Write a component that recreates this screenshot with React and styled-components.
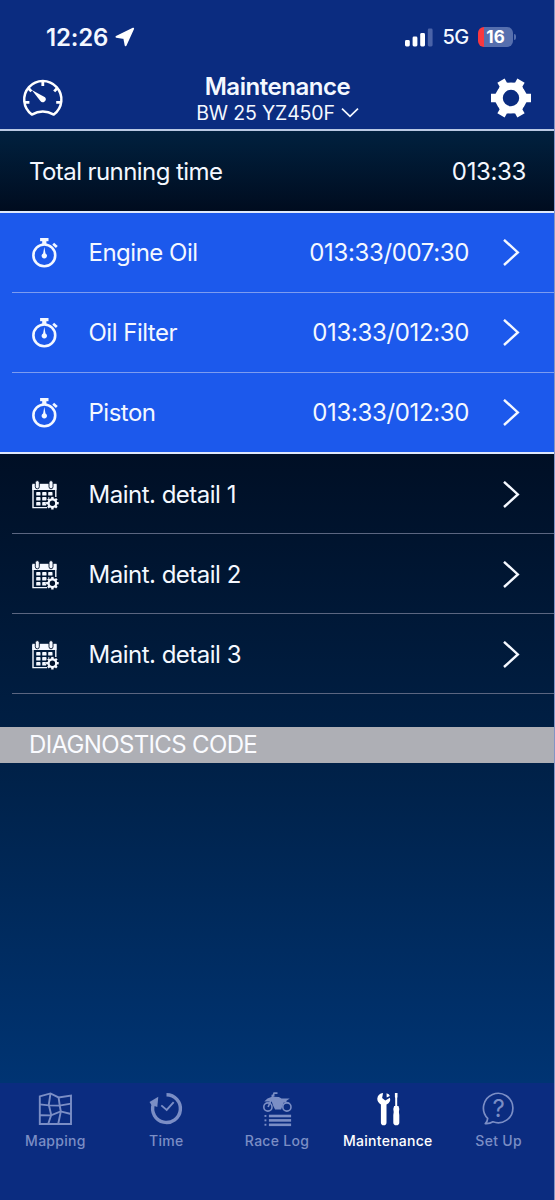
import React from 'react';
import styled, { createGlobalStyle } from "styled-components";

const GlobalStyle = createGlobalStyle`
  :root {
    --barColor: #0b2c80;
    --activeRowColor: #1c59ec;
    --textColor: #f4f8ff;
    --mutedColor: #7b8ec5;
  }

  * {
    box-sizing: border-box;
  }

  body {
    margin: 0;
    font-family: Inter, "Liberation Sans", sans-serif;
    color: var(--textColor);
  }
`;

const Screen = styled.div`
  display: flex;
  flex-direction: column;

  width: 555px;
  height: 1200px;
  overflow: hidden;

  border-right: 1px solid #8294c4;
  background: #001127;
`;

const Header = styled.header`
  height: 131px;
  flex-shrink: 0;

  background-color: var(--barColor);
  border-bottom: 2px solid #b9c9e4;
`;

const StatusBar = styled.div`
  display: flex;
  align-items: center;
  justify-content: space-between;

  height: 74px;
  padding: 0 38px 0 46px;
`;

const StatusGroup = styled.div`
  display: flex;
  align-items: center;
  gap: ${props => props.$gap}px;
`;

const Clock = styled.span`
  font-size: 24px;
  font-weight: 600;
  letter-spacing: -0.2px;
`;

const Network = styled.span`
  font-size: 20px;
  font-weight: 450;
  letter-spacing: -0.6px;
`;

const Battery = styled.div`
  display: flex;
  align-items: center;
  justify-content: center;

  width: 35px;
  height: 20px;
  border-radius: 6px;

  background: linear-gradient(to right, #f9383f 6px, #566fae 6px);

  color: #fff;
  font-size: 17px;
  font-weight: 700;
  letter-spacing: 0;
`;

const BatteryCap = styled.div`
  width: 2px;
  height: 6px;
  margin-left: 1px;
  border-radius: 0 2px 2px 0;
  background-color: #566fae;
`;

const BatteryWrap = styled.div`
  display: flex;
  align-items: center;
`;

const TitleBar = styled.div`
  display: flex;
  align-items: flex-start;
  justify-content: space-between;

  padding: 0 22px;
`;

const TitleSide = styled.div`
  display: flex;
  padding-top: ${props => props.$top}px;
`;

const TitleBlock = styled.div`
  display: flex;
  flex-direction: column;
  align-items: center;

  padding-left: 1px;
`;

const Title = styled.h1`
  margin: 0;
  font-size: 24px;
  line-height: 26px;
  font-weight: 600;
  letter-spacing: -0.45px;
`;

const Subtitle = styled.div`
  display: flex;
  align-items: center;
  gap: 6px;

  font-size: 19.5px;
  line-height: 26px;
  letter-spacing: -0.15px;
`;

const TotalRow = styled.div`
  display: flex;
  align-items: center;
  justify-content: space-between;

  height: 80px;
  flex-shrink: 0;
  padding: 0 28px 0 29px;

  background: linear-gradient(#01213f, #000c1f);
`;

const Label = styled.span`
  font-size: 24px;
  letter-spacing: -0.58px;
`;

const Time = styled.span`
  font-size: 24px;
  letter-spacing: -0.36px;
`;

const Timers = styled.div`
  flex-shrink: 0;
  height: 243px;

  background-color: var(--activeRowColor);
  border-top: 2px solid #dfe8fb;
  border-bottom: 2px solid #dfe8fb;
`;

const Content = styled.main`
  display: flex;
  flex-direction: column;
  flex: 1;

  background: linear-gradient(#000f25, #002148 50%, #003473);
`;

const Row = styled.div`
  display: flex;
  align-items: center;

  height: 80px;
  margin-left: 12px;
  padding: 0 34px 0 19px;

  border-bottom: 1px solid ${props => props.$line};
`;

const TimerRow = styled(Row)`
  &:last-child {
    border-bottom: none;
    height: 79px;
  }
`;

const DetailRow = styled(Row)`
  padding-top: 2px;
`;

const RowLabel = styled(Label)`
  flex: 1;
  margin-left: 29.5px;
  letter-spacing: -0.5px;
`;

const RowValue = styled(Time)`
  margin-right: 33px;
`;

const SectionTitle = styled.h2`
  height: 36px;
  margin: 33px 0 0;
  padding-left: 29px;

  background-color: #aeafb5;

  color: #fafbff;
  font-size: 24px;
  line-height: 36px;
  font-weight: 400;
  letter-spacing: -0.65px;
`;

const TabBar = styled.nav`
  display: grid;
  grid-template-columns: repeat(5, 1fr);

  height: 117px;
  flex-shrink: 0;

  background-color: var(--barColor);
`;

const Tab = styled.div`
  display: flex;
  flex-direction: column;
  align-items: center;

  padding-top: 8px;

  color: ${props => (props.$active ? "#fff" : "var(--mutedColor)")};
`;

const TabLabel = styled.span`
  margin-top: 5px;
  font-size: 14px;
  line-height: 18px;
  font-weight: 500;
  letter-spacing: 0.28px;
`;

const LocationIcon = () => (
    <svg width="20" height="20" viewBox="0 0 20 20" fill="#fff" stroke="#fff" strokeWidth="1.8" strokeLinejoin="round">
        <path d="M18.2 1.6 L1.4 9.8 L9.2 11 L10.6 18.4 Z" />
    </svg>
);

const SignalIcon = () => (
    <svg width="28" height="19" viewBox="0 0 28 19" fill="#fff">
        <rect x="0" y="12" width="4.8" height="6.5" rx="1.4" />
        <rect x="7.6" y="8.6" width="4.8" height="9.9" rx="1.4" />
        <rect x="15.2" y="5" width="4.8" height="13.5" rx="1.4" />
        <rect x="22.8" y="0.5" width="4.8" height="18" rx="1.4" fill="#4a63a8" />
    </svg>
);

const GaugeIcon = () => (
    <svg width="42" height="40" viewBox="22 78 42 40" fill="none" stroke="#fff" strokeWidth="2.5">
        <path d="M31.8 114.6 A18.6 18.6 0 1 1 53.8 114.6 Q42.8 108.6 31.8 114.6 Z" strokeLinejoin="round" />
        <path d="M42.8 81 V86 M25 102.4 H29.4 M56.2 102.4 H60.6 M54.2 91.4 L57.4 88 M31.4 91.4 L28.2 88" strokeWidth="2.8" />
        <path d="M31.8 90 L45 97.2 A2.9 2.9 0 1 1 40.4 101 Z" fill="#fff" stroke="none" />
    </svg>
);

const GearIcon = () => (
    <svg width="42" height="42" viewBox="-21 -21 42 42">
        <circle r="11.9" fill="none" stroke="#fff" strokeWidth="7.4" />
        {[0, 60, 120, 180, 240, 300].map(angle => (
            <path key={angle} d="M12 -7.8 L15.6 -4.2 H20 V4.2 H15.6 L12 7.8 Z" fill="#fff" transform={`rotate(${angle})`} />
        ))}
    </svg>
);

const DownIcon = () => (
    <svg width="18" height="11" viewBox="0 0 18 11" fill="none" stroke="#f4f8ff" strokeWidth="1.7">
        <path d="M1 0.6 L9 8.4 L17 0.6" />
    </svg>
);

const ChevronIcon = () => (
    <svg width="18" height="28" viewBox="0 0 18 28" fill="none" stroke="#f4f8ff" strokeWidth="2.4">
        <path d="M2 0.8 L15.8 13.4 L2 26" />
    </svg>
);

const StopwatchIcon = () => (
    <svg width="28" height="32" viewBox="31 237 28 32" fill="#f4f8ff">
        <circle cx="44.3" cy="255.4" r="10.9" fill="none" stroke="#f4f8ff" strokeWidth="2.6" />
        <rect x="40.1" y="238" width="8.4" height="3.2" />
        <rect x="42.2" y="241" width="4.2" height="4" />
        <path d="M53.2 243.8 L56.8 247" stroke="#f4f8ff" strokeWidth="2.8" />
        <path d="M44.3 247 L45.5 253.4 A2.7 2.7 0 1 1 43.1 253.4 Z" />
    </svg>
);

const CalendarIcon = () => (
    <svg width="28" height="30" viewBox="31 479 28 30" fill="#f4f8ff">
        <path d="M33 484 H55.8 V496 M33 484 V506.6 H47" fill="none" stroke="#f4f8ff" strokeWidth="1.4" />
        <rect x="32.3" y="482.8" width="24.2" height="6.2" />
        {[37.3, 51].map(x => (
            <rect key={x} x={x - 2} y="479.6" width="4" height="8.2" rx="2" stroke="#01122b" strokeWidth="0.9" />
        ))}
        {[491, 496, 501].map((y, line) =>
            [36.2, 42.2, 48.2].slice(0, line === 2 ? 2 : 3).map(x => (
                <rect key={x + y} x={x} y={y} width="4.3" height="3.6" rx="0.7" />
            ))
        )}
        <circle cx="52.4" cy="502.2" r="6.6" fill="#01122b" />
        <circle cx="52.4" cy="502.2" r="3.8" fill="none" stroke="#f4f8ff" strokeWidth="2.2" />
        {[0, 45, 90, 135, 180, 225, 270, 315].map(angle => (
            <rect key={angle} x="56.2" y="501" width="2.5" height="2.4" transform={`rotate(${angle} 52.4 502.2)`} />
        ))}
    </svg>
);

const MappingIcon = () => (
    <svg width="36" height="36" viewBox="37 1091 36 36" fill="none" stroke="currentColor" strokeWidth="1.9">
        <path d="M39.8 1096.4 L50.5 1093.4 L58.6 1097.4 L71 1095.6 V1124 H39.8 Z" />
        <path d="M50.5 1093.4 L48.8 1104.6 L51.2 1115 L48.2 1124 M58.6 1097.4 L59.8 1106 L60.8 1111.6 L58.2 1124" />
        <path d="M39.8 1104.4 L48.8 1105.4 L59.4 1105.6 L71 1103.6 M39.8 1115.2 L51 1115.4 L60.6 1111.4 L71 1114" />
    </svg>
);

const TimeIcon = () => (
    <svg width="36" height="36" viewBox="148.5 1091 36 36" fill="none" stroke="currentColor">
        <path d="M167 1094.7 A13.9 13.9 0 1 1 153.8 1104.3" strokeWidth="3.4" />
        <path d="M150 1102 L158.8 1096.8 L157.8 1107 L152 1105 Z" fill="currentColor" stroke="none" />
        <path d="M161.8 1105.4 L167.2 1110 L174.2 1102.2" strokeWidth="1.9" />
    </svg>
);

const RaceLogIcon = () => (
    <svg width="36" height="36" viewBox="259.5 1091 36 36" fill="currentColor">
        <circle cx="268.4" cy="1107" r="4.1" fill="none" stroke="currentColor" strokeWidth="1.6" />
        <circle cx="287.4" cy="1107" r="4.1" fill="none" stroke="currentColor" strokeWidth="1.6" />
        <path d="M268.6 1107 L274.6 1093.2 H278 M272 1095.6 H275" fill="none" stroke="currentColor" strokeWidth="1.7" />
        <path d="M264.8 1101.6 L268 1098.6 L272.4 1096.8 L279.4 1097 L282 1098.6 L290.2 1098.4 L286.4 1101.2 L290.4 1103 L284.2 1102.6 L281.6 1109.6 H275.6 L273.8 1106 L272.2 1101.6 Z" />
        {[1115, 1119.4, 1123.8].map(y => (
            <React.Fragment key={y}>
                <rect x="265" y={y} width="1.9" height="1.9" />
                <rect x="269.4" y={y - 0.3} width="22.2" height="2.6" />
            </React.Fragment>
        ))}
    </svg>
);

const MaintenanceIcon = () => (
    <svg width="36" height="36" viewBox="369.5 1091 36 36" fill="currentColor">
        <path d="M382.6 1093 L381.6 1098 L384.8 1100.4 L389.4 1097.8 Q390.8 1102 386 1104.6 V1122.4 Q386 1125.2 383.2 1125.2 Q380.4 1125.2 380.4 1122.4 V1104.6 Q376.6 1102 376.8 1098.4 Q377.4 1093.6 382.6 1093 Z" />
        <path d="M386 1093.2 Q388.8 1094 389.4 1096 L386.2 1097.4 Z" />
        <path d="M394.4 1093 H397 V1097 L396.7 1098 V1106 H398 L398.8 1109 L398.4 1112 L398.8 1115 V1122.4 Q398.8 1125.2 395.8 1125.2 Q392.8 1125.2 392.8 1122.4 V1115 L393.2 1112 L392.8 1109 L393.6 1106 H394.7 V1098 L394.4 1097 Z" />
    </svg>
);

const SetUpIcon = () => (
    <svg width="36" height="36" viewBox="480.5 1091 36 36" fill="none" stroke="currentColor" strokeWidth="1.7">
        <path d="M487.2 1118.4 A14.7 14.7 0 1 1 492.4 1121.8 Q489 1124 484.8 1123.6 Q487 1121.4 487.2 1118.4 Z" strokeLinejoin="round" />
        <text x="498.2" y="1116.6" fontSize="24" fontWeight="400" textAnchor="middle" fill="currentColor" stroke="none">?</text>
    </svg>
);

const timers = [
    { name: "Engine Oil", value: "013:33/007:30" },
    { name: "Oil Filter", value: "013:33/012:30" },
    { name: "Piston", value: "013:33/012:30" },
];

const details = ["Maint. detail 1", "Maint. detail 2", "Maint. detail 3"];

const tabs = [
    { name: "Mapping", Icon: MappingIcon },
    { name: "Time", Icon: TimeIcon },
    { name: "Race Log", Icon: RaceLogIcon },
    { name: "Maintenance", Icon: MaintenanceIcon, active: true },
    { name: "Set Up", Icon: SetUpIcon },
];

const App = () => {
    return (
        <Screen>
            <GlobalStyle />
            <Header>
                <StatusBar>
                    <StatusGroup $gap={7}>
                        <Clock>12:26</Clock>
                        <LocationIcon />
                    </StatusGroup>
                    <StatusGroup $gap={9.5}>
                        <SignalIcon />
                        <Network>5G</Network>
                        <BatteryWrap>
                            <Battery>16</Battery>
                            <BatteryCap />
                        </BatteryWrap>
                    </StatusGroup>
                </StatusBar>
                <TitleBar>
                    <TitleSide $top={4}>
                        <GaugeIcon />
                    </TitleSide>
                    <TitleBlock>
                        <Title>Maintenance</Title>
                        <Subtitle>BW 25 YZ450F <DownIcon /></Subtitle>
                    </TitleBlock>
                    <TitleSide $top={2.5}>
                        <GearIcon />
                    </TitleSide>
                </TitleBar>
            </Header>
            <TotalRow>
                <Label>Total running time</Label>
                <Time>013:33</Time>
            </TotalRow>
            <Timers>
                {timers.map(timer => (
                    <TimerRow key={timer.name} $line="#7c9cf0">
                        <StopwatchIcon />
                        <RowLabel>{timer.name}</RowLabel>
                        <RowValue>{timer.value}</RowValue>
                        <ChevronIcon />
                    </TimerRow>
                ))}
            </Timers>
            <Content>
                <div>
                    {details.map(detail => (
                        <DetailRow key={detail} $line="#5b6681">
                            <CalendarIcon />
                            <RowLabel>{detail}</RowLabel>
                            <ChevronIcon />
                        </DetailRow>
                    ))}
                </div>
                <SectionTitle>DIAGNOSTICS CODE</SectionTitle>
            </Content>
            <TabBar>
                {tabs.map(({ name, Icon, active }) => (
                    <Tab key={name} $active={active}>
                        <Icon />
                        <TabLabel>{name}</TabLabel>
                    </Tab>
                ))}
            </TabBar>
        </Screen>
    );
};

export default App;
